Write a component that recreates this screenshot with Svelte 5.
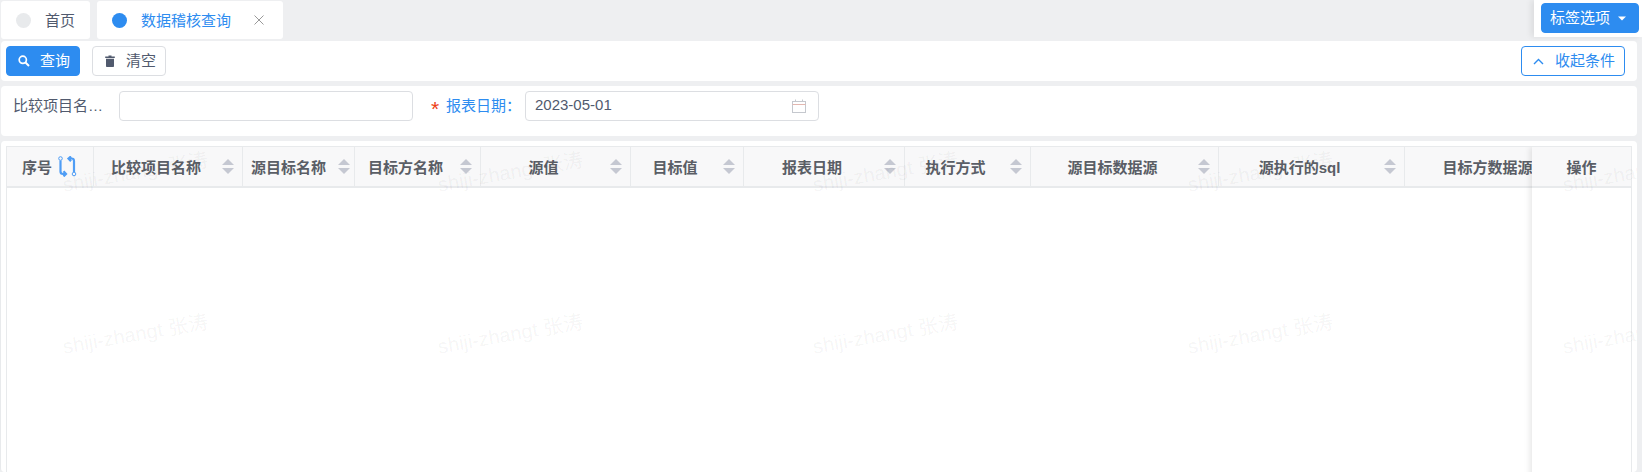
<script>
  // column widths taken from the header borders; last one runs under the fixed column
  const columns = [
    { title: '比较项目名称', width: 149 },
    { title: '源目标名称', width: 112 },
    { title: '目标方名称', width: 126 },
    { title: '源值', width: 150 },
    { title: '目标值', width: 113 },
    { title: '报表日期', width: 161 },
    { title: '执行方式', width: 126 },
    { title: '源目标数据源', width: 188 },
    { title: '源执行的sql', width: 186 },
    { title: '目标方数据源', width: 190 }
  ];

  const watermarks = Array.from({ length: 10 });
</script>

<div class="page">
  <div class="tabs">
    <div class="tab">
      <span class="dot"></span>
      <span>首页</span>
    </div>
    <div class="tab active">
      <span class="dot"></span>
      <span>数据稽核查询</span>
      <svg class="close" width="10" height="10" viewBox="0 0 10 10">
        <path d="M0.5 0.5L9.5 9.5M9.5 0.5L0.5 9.5" stroke="#999" stroke-width="1" fill="none" />
      </svg>
    </div>
    <div class="tab-options">
      <button class="btn primary options-btn">
        <span>标签选项</span>
        <svg width="8" height="5" viewBox="0 0 8 5"><path d="M0 0.5H8L4 4.5Z" fill="#fff" /></svg>
      </button>
    </div>
  </div>

  <div class="panel toolbar">
    <button class="btn primary query-btn">
      <svg width="12" height="12" viewBox="0 0 12 12" fill="none">
        <circle cx="4.8" cy="4.8" r="3.6" stroke="#fff" stroke-width="1.7" />
        <path d="M7.5 7.5L11 11" stroke="#fff" stroke-width="2" />
      </svg>
      <span>查询</span>
    </button>
    <button class="btn clear-btn">
      <svg width="10" height="12" viewBox="0 0 10 12">
        <path d="M3.5 0.5H6.5V1.6H9.8V3H0.2V1.6H3.5Z M1 3.8H9V11.2Q9 12 8.2 12H1.8Q1 12 1 11.2Z" fill="#515a6e" />
      </svg>
      <span>清空</span>
    </button>
    <button class="btn collapse-btn">
      <svg width="11" height="7" viewBox="0 0 11 7" fill="none">
        <path d="M1 6L5.5 1.5L10 6" stroke="#2d8cf0" stroke-width="1.4" />
      </svg>
      <span>收起条件</span>
    </button>
  </div>

  <div class="panel form">
    <span class="label name-label">比较项目名…</span>
    <div class="input name-input"></div>
    <span class="required">*</span>
    <span class="label date-label">报表日期：</span>
    <div class="input date-input">
      <span>2023-05-01</span>
      <svg width="14" height="14" viewBox="0 0 14 14" fill="none" stroke="#c5c8ce">
        <rect x="0.5" y="2.5" width="13" height="11" />
        <path d="M0.5 5.5H13.5" stroke="#e3b7b0" />
        <path d="M3.5 0.5V2.5M10.5 0.5V2.5" />
      </svg>
    </div>
  </div>

  <div class="panel table-panel">
    <div class="table">
      <div class="header">
        <div class="cell index-cell">
          <span>序号</span>
          <svg width="19" height="21" viewBox="0 0 19 21" fill="none" stroke="#4f9df5">
            <circle cx="2.5" cy="2.5" r="1.8" stroke-width="1" />
            <path d="M2.5 4.5V15.5Q2.5 18 5 18H7.5M5.5 15.2L8 18L5.5 20.4" stroke-width="2.2" />
            <circle cx="16" cy="18" r="1.8" stroke-width="1" />
            <path d="M16 16V5Q16 2.5 13.5 2.5H11M13 0.4L10.5 2.5L13 5.2" stroke-width="2.2" />
          </svg>
        </div>
        {#each columns as col}
          <div class="cell" style="width: {col.width}px">
            <span class="title">{col.title}</span>
            <span class="sort">
              <i class="up"></i>
              <i class="down"></i>
            </span>
          </div>
        {/each}
      </div>

      <div class="fixed-col">
        <div class="fixed-head">操作</div>
      </div>
    </div>

    <div class="watermarks">
      {#each watermarks as _}
        <span>shiji-zhangt 张涛</span>
      {/each}
    </div>
  </div>
</div>

<style>
  :global(body) {
    margin: 0;
    background: #eeeff1;
  }

  .page {
    height: 472px;
    overflow: hidden;
    display: flex;
    flex-direction: column;
    font-family: 'Liberation Sans', 'Noto Sans CJK SC', sans-serif;
    font-size: 15px;
    color: #515a6e;
  }

  .tabs {
    display: flex;
    gap: 7px;
    height: 38px;
    padding: 1px 0 2px 1px;
    flex: none;
  }

  .tab {
    display: flex;
    align-items: center;
    gap: 14px;
    height: 38px;
    width: 89px;
    padding-left: 15px;
    box-sizing: border-box;
    background: #fff;
    border-radius: 3px;
  }

  .tab > span:last-of-type {
    margin-bottom: 1px;
  }

  .tab.active {
    width: 186px;
    color: #2d8cf0;
  }

  .dot {
    width: 15px;
    height: 15px;
    border-radius: 50%;
    background: #e8eaec;
  }

  .tab.active .dot {
    background: #2d8cf0;
    margin-bottom: 0;
  }

  .close {
    margin-left: 9px;
  }

  .tab-options {
    margin-left: auto;
    margin-top: -1px;
    height: 37px;
    width: 108px;
    padding: 3px 3px 0 7px;
    box-sizing: border-box;
    background: #fff;
    box-shadow: -3px 0 6px rgba(0, 0, 0, 0.08);
    position: relative;
    z-index: 2;
  }

  .btn {
    display: flex;
    align-items: center;
    height: 30px;
    padding: 0;
    box-sizing: border-box;
    border: 1px solid #dcdee2;
    border-radius: 4px;
    background: #fff;
    color: #515a6e;
    font: inherit;
  }

  .btn span {
    margin-top: -4px;
  }

  .btn.primary {
    background: #2d8cf0;
    border-color: #2d8cf0;
    color: #fff;
  }

  .options-btn {
    width: 98px;
    padding-left: 8px;
    gap: 8px;
  }

  .panel {
    background: #fff;
    border-radius: 4px;
    margin-left: 1px;
    width: 1636px;
    flex: none;
    box-sizing: border-box;
  }

  .toolbar {
    height: 40px;
    display: flex;
    align-items: center;
    padding: 0 12px 0 5px;
  }

  .query-btn {
    width: 74px;
    padding-left: 11px;
    gap: 10px;
  }

  .clear-btn {
    width: 74px;
    margin-left: 12px;
    padding-left: 12px;
    gap: 11px;
  }

  .collapse-btn {
    width: 104px;
    margin-left: auto;
    padding-left: 11px;
    gap: 11px;
    border-color: #2d8cf0;
    color: #2d8cf0;
  }

  .form {
    height: 50px;
    margin-top: 5px;
    display: flex;
    align-items: flex-start;
    padding: 5px 0 0 12px;
    line-height: 30px;
  }

  .name-label {
    width: 106px;
  }

  .input {
    width: 294px;
    height: 30px;
    box-sizing: border-box;
    border: 1px solid #dcdee2;
    border-radius: 4px;
  }

  .required {
    margin-left: 18px;
    width: 15px;
    color: #ed4014;
    font-size: 21px;
    line-height: 36px;
    height: 30px;
  }

  .date-label {
    width: 79px;
    color: #2d8cf0;
  }

  .date-input {
    display: flex;
    align-items: center;
    justify-content: space-between;
    padding: 0 12px 0 9px;
    line-height: 26px;
  }

  .date-input span {
    margin-top: -2px;
  }

  .table-panel {
    margin-top: 5px;
    flex: 1;
    padding: 5px 5px 0;
    position: relative;
    overflow: hidden;
    border-left: 1px solid #e8eaec;
    margin-left: 0;
    width: 1637px;
  }

  .table {
    position: relative;
    height: 340px;
    box-sizing: border-box;
    border: 1px solid #e8eaec;
    border-bottom: 0;
    overflow: hidden;
  }

  .header {
    display: flex;
    width: max-content;
    height: 41px;
    box-sizing: border-box;
    background: #f8f8f9;
    border-bottom: 2px solid #e8eaec;
    font-weight: 700;
    color: #5a5e66;
  }

  .cell {
    display: flex;
    align-items: center;
    gap: 12px;
    padding: 0 8px;
    box-sizing: border-box;
    border-right: 1px solid #e8eaec;
    flex: none;
  }

  .index-cell {
    width: 87px;
    gap: 6px;
    padding-left: 15px;
  }

  .title {
    flex: 1;
    text-align: center;
    white-space: nowrap;
  }

  .sort {
    display: flex;
    flex-direction: column;
    gap: 3px;
    width: 12px;
    flex: none;
  }

  .sort i {
    width: 0;
    height: 0;
    border-left: 6px solid transparent;
    border-right: 6px solid transparent;
  }

  .sort .up {
    border-bottom: 6px solid #c5c8d2;
  }

  .sort .down {
    border-top: 6px solid #c5c8d2;
  }

  .fixed-col {
    position: absolute;
    top: 0;
    right: 0;
    bottom: 0;
    width: 99px;
    background: #fff;
    box-shadow: -2px 0 6px rgba(0, 0, 0, 0.1);
  }

  .fixed-head {
    height: 41px;
    box-sizing: border-box;
    display: flex;
    align-items: center;
    justify-content: center;
    background: #f8f8f9;
    border-bottom: 2px solid #e8eaec;
    font-weight: 700;
    color: #5a5e66;
  }

  .watermarks {
    position: absolute;
    top: 16px;
    left: 61px;
    display: grid;
    grid-template-columns: repeat(5, 147px);
    grid-auto-rows: 30px;
    column-gap: 228px;
    row-gap: 132px;
    pointer-events: none;
    font-size: 20px;
    line-height: 30px;
    color: rgba(0, 0, 0, 0.05);
    white-space: nowrap;
  }

  .watermarks span {
    transform: rotate(-10deg);
  }
</style>
